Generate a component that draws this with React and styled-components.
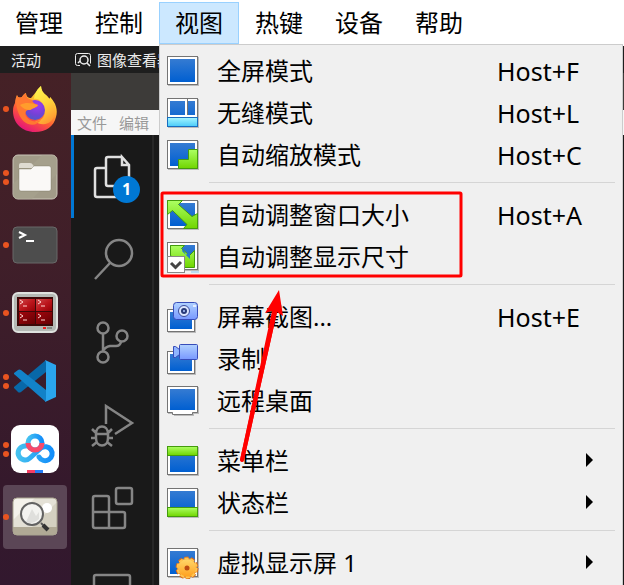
import React from "react";
import styled, { createGlobalStyle, css } from "styled-components";

const GlobalStyle = createGlobalStyle`
  *, *::before, *::after { box-sizing: border-box; }
  body {
    margin: 0;
    background: #151817;
    font-family: "Noto Sans", "Noto Sans CJK SC", sans-serif;
  }
  button { font: inherit; color: inherit; border: 0; background: none; padding: 0; margin: 0; }
  ul { list-style: none; margin: 0; padding: 0; }
  svg { display: block; }
`;

const Page = styled.div`
  position: relative;
  display: flex;
  flex-direction: column;
  height: 100vh;
  overflow: hidden;
`;

const MenuBar = styled.nav`
  display: flex;
  flex: none;
  height: 46px;
  padding-top: 2px;
  margin-left: -1px;
  background: #fff;
`;

const MenuBarItem = styled.button`
  width: 80px;
  height: 42px;
  font-size: 24px;
  line-height: 40px;
  color: #000;
  border: 1px solid ${(p) => (p.$open ? "#99d1ff" : "transparent")};
  background: ${(p) => (p.$open ? "#cce8ff" : "transparent")};
`;

const Desktop = styled.div`
  display: flex;
  flex-direction: column;
  flex: 1;
  min-height: 0;
`;

const TopPanel = styled.header`
  display: flex;
  align-items: center;
  flex: none;
  height: 27px;
  padding-left: 11px;
  background: #1e1e1e;
  color: #ececec;
  font-size: 15px;
  white-space: nowrap;
`;

const Activities = styled.button`
  width: 64px;
  text-align: left;
`;

const AppTitle = styled.span`
  display: flex;
  align-items: center;
  gap: 6px;
`;

const DesktopBody = styled.div`
  display: flex;
  flex: 1;
  min-height: 0;
`;

const Dock = styled.aside`
  display: flex;
  flex-direction: column;
  gap: 4px;
  flex: none;
  width: 71px;
  padding: 4px 4px 0 3px;
  background: linear-gradient(#452126, #401f29 35%, #35192c 80%, #32182e);
`;

const DockItem = styled.button`
  position: relative;
  display: grid;
  place-items: center;
  flex: none;
  height: 64px;
  border-radius: 4px;
  background: ${(p) => (p.$active ? "#5b4656" : "transparent")};
`;

const Running = styled.span`
  position: absolute;
  left: 0;
  top: 0;
  height: 100%;
  display: flex;
  flex-direction: column;
  justify-content: center;
  gap: 3px;
`;

const Dot = styled.i`
  width: 6px;
  height: 6px;
  border-radius: 50%;
  background: #e95420;
`;

const AppWindow = styled.section`
  display: flex;
  flex-direction: column;
  flex: 1;
  min-width: 0;
  background: #191919;
`;

const TitleBar = styled.div`
  flex: none;
  height: 37px;
  background: #3d3b39;
`;

const WindowMenu = styled.div`
  display: flex;
  align-items: center;
  gap: 12px;
  flex: none;
  height: 25px;
  padding-left: 6px;
  background: #f6f6f6;
  color: #999;
  font-size: 15px;
`;

const ActivityBar = styled.div`
  flex: 1;
  width: 83px;
  border-right: 2px solid #272727;
`;

const Activity = styled.button`
  position: relative;
  display: grid;
  place-items: center;
  width: 100%;
  height: 83px;
  color: ${(p) => (p.$active ? "#e0e0e0" : "#858585")};
  ${(p) =>
    p.$active &&
    css`
      box-shadow: inset 3px 0 #0078d4;
    `}
`;

const Badge = styled.span`
  position: absolute;
  left: 42px;
  top: 41px;
  width: 27px;
  height: 27px;
  border-radius: 50%;
  background: #0078d4;
  color: #fff;
  font: bold 16px/27px "Noto Sans", sans-serif;
  text-align: center;
`;

const Dropdown = styled.div`
  position: absolute;
  top: 44px;
  left: 159px;
  right: 1px;
  bottom: 0;
  padding-top: 5px;
  border: 1px solid #ccc;
  border-bottom: 0;
  background: #f0f0f0;
  color: #000;
`;

const MenuRow = styled.button`
  display: grid;
  grid-template-columns: 32px 1fr 125px;
  align-items: center;
  width: 100%;
  height: 42px;
  padding-left: 7px;
  text-align: left;
  font-size: 24px;
  line-height: 42px;
  white-space: nowrap;
`;

const Label = styled.span`
  padding-left: 18px;
`;

const Shortcut = styled.kbd`
  font: 25px/42px "Noto Sans", sans-serif;
`;

const SubmenuMark = styled.span`
  justify-self: end;
  margin-right: 28px;
  padding-bottom: 2px;
`;

const Divider = styled.li`
  height: 1px;
  margin: 6px 7px 11px 49px;
  background: #d5d5d5;
`;

const Annotation = styled.svg`
  position: absolute;
  left: 159px;
  top: 190px;
  pointer-events: none;
`;

/* ---------- dock icons ---------- */

const Firefox = () => (
  <svg width="46" height="48" viewBox="0 0 46 48">
    <defs>
      <linearGradient id="ffBody" x1="0.8" y1="0.05" x2="0.3" y2="1">
        <stop offset="0" stopColor="#fff44f" />
        <stop offset="0.35" stopColor="#ffb52e" />
        <stop offset="0.65" stopColor="#ff5a36" />
        <stop offset="1" stopColor="#e3117c" />
      </linearGradient>
      <radialGradient id="ffGlobe" cx="0.6" cy="0.25" r="0.8">
        <stop offset="0" stopColor="#a13cf0" />
        <stop offset="0.6" stopColor="#7541d6" />
        <stop offset="1" stopColor="#4d58c9" />
      </radialGradient>
      <linearGradient id="ffTail" x1="0.3" y1="0" x2="0.7" y2="1">
        <stop offset="0" stopColor="#fff44f" />
        <stop offset="0.5" stopColor="#ffd33a" />
        <stop offset="1" stopColor="#ff9532" />
      </linearGradient>
    </defs>
    <path d="M5 10C6 13 8 13 10 12C11 10 12 9 14 8C14 11 16 13 19 13L29 1C29 5 31 8 35 11C37 13 38 15 38 12C44 18 46 25 44 32C42 41 34 47 23 47C10 47 1 38 1 26C1 22 2 20 3 18C3 15 4 12 5 10Z" fill="url(#ffBody)" />
    <path d="M22 14C23 8 25 4 29 1C29 5 31 8 35 11L38 15V12C44 20 45 29 40 35C35 41 27 40 23 36C31 36 34 30 32 24C31 17 27 13 22 14Z" fill="url(#ffTail)" />
    <circle cx="23" cy="25" r="10" fill="url(#ffGlobe)" />
    <path d="M5 10C6 13 8 13 10 12C11 10 12 9 14 8C14 12 16 14 20 15C21 18 23 19 26 20C25 23 21 22 19 25C15 24 12 27 14 31C17 36 23 38 29 35C24 42 14 41 9 33C5 27 3 17 5 10Z" fill="#ff7831" />
    <path d="M8 20C14 17 19 18 26 20C24 23 21 23 18 25C14 25 10 23 8 20Z" fill="#ff9c2c" />
  </svg>
);

const Files = () => (
  <svg width="46" height="46" viewBox="0 0 46 46">
    <rect x="1" y="1" width="44" height="44" rx="5" fill="#a19b88" stroke="#c9c5b7" />
    <path d="M1 30L30 1H40Q45 1 45 6V20L20 45H6Q1 45 1 40Z" fill="#a9a390" opacity="0.6" />
    <path d="M7 13V11Q7 9 9 9H18Q20 9 21 11L23 14H7Z" fill="#dedbd1" />
    <path d="M7 15H19L22 12H37Q39 12 39 14V35Q39 37 37 37H9Q7 37 7 35Z" fill="#faf9f7" stroke="#77725f" strokeOpacity="0.4" />
  </svg>
);

const Terminal = () => (
  <svg width="46" height="38" viewBox="0 0 46 38">
    <rect x="1" y="1" width="44" height="36" rx="4" fill="#4d4d4d" stroke="#686868" />
    <path d="M7 6L13 9L7 12M14 15H22" fill="none" stroke="#fff" strokeWidth="2" />
  </svg>
);

const Terminator = () => (
  <svg width="46" height="42" viewBox="0 0 46 42">
    <defs>
      <linearGradient id="redPane" x1="0" y1="0" x2="1" y2="1">
        <stop offset="0" stopColor="#cc4a4c" />
        <stop offset="0.5" stopColor="#bd171d" />
        <stop offset="1" stopColor="#970006" />
      </linearGradient>
      <linearGradient id="darkRed" x1="0" y1="0" x2="1" y2="1">
        <stop offset="0" stopColor="#a3070d" />
        <stop offset="1" stopColor="#650004" />
      </linearGradient>
    </defs>
    <rect x="1" y="1" width="44" height="39" rx="5" fill="#b5b9b5" stroke="#dfe2df" strokeWidth="2" />
    <path d="M5 5H41V34H5Z" fill="#3d0909" />
    <rect x="7" y="7" width="16" height="12" fill="url(#redPane)" />
    <rect x="24" y="7" width="16" height="12" fill="url(#redPane)" />
    <rect x="7" y="20" width="16" height="12" fill="url(#darkRed)" />
    <rect x="24" y="20" width="16" height="12" fill="url(#darkRed)" />
    <path d="M8 8L11 10L8 12M11 14H15M26 8L29 10L26 12M29 14H33M8 22L11 24L8 26M11 28H15M26 22L29 24L26 26M29 28H33" fill="none" stroke="#ffd5d0" />
    <rect x="31" y="35" width="3" height="2" fill="#ef2020" />
    <rect x="35" y="35" width="5" height="2" fill="#858985" />
  </svg>
);

const VSCode = () => (
  <svg width="44" height="44" viewBox="0 0 44 44">
    <path d="M1 29L5 33Q6 34 8 33L33 13V1L1 28Z" fill="#0868a8" />
    <path d="M1 14L5 11Q6 10 8 11L33 31V43L1 15Z" fill="#1282c8" />
    <path d="M32 1L43 6V38L32 43Q33 42 33 40V4Q33 2 32 1Z" fill="#2aa5ed" />
  </svg>
);

const Baidu = () => (
  <svg width="48" height="48" viewBox="0 0 48 48">
    <defs>
      <linearGradient id="cloudBlue">
        <stop offset="0" stopColor="#45c1ef" />
        <stop offset="1" stopColor="#138efa" />
      </linearGradient>
    </defs>
    <rect width="48" height="48" rx="9" fill="#fff" />
    <g fill="none" stroke="url(#cloudBlue)" strokeWidth="5" strokeLinecap="round">
      <path d="M28 32A7 7 0 1 0 30 23L19 33A7 7 0 1 1 15 21" />
      <circle cx="24" cy="18" r="7" />
    </g>
    <path d="M17 18A7 7 0 0 0 31 18" fill="none" stroke="#f84a6b" strokeWidth="5" />
    <path d="M16 45H24V48H16Z" fill="#f83e64" />
    <path d="M24 45H32V48H24Z" fill="#247cf6" />
  </svg>
);

const ImageViewer = () => (
  <svg width="46" height="40" viewBox="0 0 46 40">
    <rect x="1" y="1" width="44" height="37" rx="4" fill="#e4e1d6" />
    <path d="M1 23L23 1H5Q1 1 1 5Z" fill="#f4f2eb" />
    <path d="M20 30L45 5V30Z" fill="#d4d0c1" />
    <path d="M1 30H45V34Q45 38 41 38H5Q1 38 1 34Z" fill="#b0a995" />
    <circle cx="35" cy="11" r="5" fill="#fff" />
    <rect x="1" y="1" width="44" height="37" rx="4" fill="none" stroke="#aaa591" />
    <circle cx="20" cy="17" r="11" fill="#f3f3f0" stroke="#626262" strokeWidth="2" />
    <path d="M14 25L20 12L24 19L27 15V22Q20 28 14 25Z" fill="#dfdfdc" />
    <path d="M29 26L32 29" stroke="#555" strokeWidth="2" />
    <path d="M31 28L36 33" stroke="#333" strokeWidth="4" />
  </svg>
);

const dockApps = [
  { name: "Firefox", Icon: Firefox, windows: 1 },
  { name: "文件", Icon: Files, windows: 2 },
  { name: "终端", Icon: Terminal, windows: 1 },
  { name: "Terminator", Icon: Terminator, windows: 1 },
  { name: "Visual Studio Code", Icon: VSCode, windows: 2 },
  { name: "百度网盘", Icon: Baidu, windows: 2 },
  { name: "图像查看器", Icon: ImageViewer, windows: 1, active: true },
];

/* ---------- activity bar icons ---------- */

const activities = [
  {
    name: "资源管理器",
    active: true,
    badge: 1,
    art: (
      <path d="M17 15H9Q7 15 7 17V42Q7 44 9 44H28Q30 44 31 42M34 4H20Q18 4 18 6V31Q18 33 20 33H39Q41 33 41 31V12L34 4V12H41" />
    ),
  },
  { name: "搜索", art: <path d="M44 17A13 13 0 1 1 18 17A13 13 0 1 1 44 17ZM22 27L7 43" /> },
  {
    name: "源代码管理",
    art: (
      <>
        <circle cx="15" cy="9" r="5.5" />
        <circle cx="34" cy="17" r="5.5" />
        <circle cx="15" cy="38" r="5.5" />
        <path d="M15 15V32Q17 28 22 27H28Q32 27 33 23" />
      </>
    ),
  },
  {
    name: "运行和调试",
    art: (
      <>
        <path d="M18 22V4L44 21L27 32" />
        <path d="M8 32V36C8 46 20 46 20 36V32C20 22 8 22 8 32ZM7 32H21M8 31L4 27M20 31L24 27M8 36H3M20 36H25M9 40L4 44M19 40L24 44" />
      </>
    ),
  },
  {
    name: "扩展",
    art: (
      <>
        <path d="M7 11H19Q21 11 21 13V27H35Q37 27 37 29V41Q37 43 35 43H7Q5 43 5 41V13Q5 11 7 11ZM5 27H21V43" />
        <rect x="28" y="3" width="16" height="16" rx="2" />
      </>
    ),
  },
  { name: "远程", art: <rect x="6" y="7" width="36" height="30" rx="2" /> },
];

/* ---------- menu icons ---------- */

const Screen = ({ y = 1, w = 31, h = 29 }) => (
  <>
    <rect x="1" y={y + 1} width={w} height={h} fill="#bbb" />
    <rect x="0.5" y={y + 0.5} width={w - 1} height={h - 1} fill="#fff" stroke="#747474" />
    <rect x="3" y={y + 3} width={w - 6} height={h - 6} fill="url(#screenBlue)" />
  </>
);

const green = { fill: "url(#lime)", stroke: "#439b0c" };

const menuArt = {
  full: <Screen />,
  seamless: (
    <>
      <Screen />
      <path d="M18 2H21V20H18Z" fill="#fff" />
      <path d="M20.5 1V19" stroke="#747474" />
      <path d="M1 18H30V20H1Z" fill="#fff" />
      <rect x="0.5" y="20.5" width="30" height="9" fill="url(#aqua)" stroke="#176dc0" />
    </>
  ),
  scale: (
    <>
      <Screen />
      <path d="M21.5 10.5H30.5V29.5H11.5V20.5H21.5Z" {...green} />
    </>
  ),
  resize: (
    <>
      <Screen />
      <path d="M0.5 1.5H15.5L11.5 5.5L25 17.5L30.5 14.5V29.5H16.5L20 25.5L5.5 11.5L0.5 15.5Z" {...green} />
    </>
  ),
  guest: (
    <>
      <rect x="24" y="20" width="8" height="12" fill="#bddcf3" />
      <Screen h={28} />
      <path d="M3.5 4.5H17.5L14.5 7.5L22.5 14.5L27.5 9.5V26.5H12V21L3.5 14.5Z" {...green} />
      <path d="M16 8L19 14L23 10V18L15 10Z" fill="#2574cf" />
      <rect x="0.5" y="15.5" width="17" height="16" fill="#fff" stroke="#888" />
      <path d="M4 22L8.5 26.5L14 21" fill="none" stroke="#444" strokeWidth="3" />
    </>
  ),
  shot: (
    <>
      <Screen y={8} w={28} h={23} />
      <rect x="6.5" y="1.5" width="24" height="17" rx="3" fill="url(#lens)" stroke="#374cb9" />
      <circle cx="17" cy="10" r="5.5" fill="#dce6ff" stroke="#3b4c9b" />
      <circle cx="17" cy="10" r="3" fill="#293a78" />
      <circle cx="17" cy="10" r="1" fill="#b5cbff" />
      <rect x="26" y="4" width="3" height="2" fill="#e5edff" />
    </>
  ),
  record: (
    <>
      <Screen y={8} w={28} h={23} />
      <path d="M6.5 3.5H8.5L12.5 6.5V11.5L8.5 14.5H6.5Z" fill="#8fb4ff" stroke="#374cb9" />
      <rect x="12.5" y="1.5" width="18" height="15" rx="1" fill="url(#lens)" stroke="#374cb9" />
    </>
  ),
  remote: (
    <>
      <path d="M7 27H27V31H7Z" fill="#bbb" />
      <Screen h={27} />
      <path d="M1 26H30V27H1Z" fill="#fff" />
      <path d="M0.5 26V27.5H5.5V29.5H25.5V27.5H30.5V26" fill="#fff" stroke="#747474" />
    </>
  ),
  menubar: (
    <>
      <Screen />
      <rect x="0.5" y="1.5" width="30" height="9" {...green} />
    </>
  ),
  statusbar: (
    <>
      <Screen />
      <rect x="0.5" y="20.5" width="30" height="9" {...green} />
    </>
  ),
  virtual: (
    <>
      <Screen />
      <circle cx="20" cy="21" r="9.5" fill="none" stroke="#d96b1c" strokeWidth="4" strokeDasharray="4 2" />
      <circle cx="20" cy="21" r="9.5" fill="url(#gold)" stroke="#e88b2b" />
      <circle cx="20" cy="21" r="9.5" fill="none" stroke="#ffc551" strokeWidth="2" strokeDasharray="4 2" />
      <circle cx="20" cy="21" r="2.5" fill="#bd4c12" />
    </>
  ),
};

const MenuDefs = () => (
  <svg width="0" height="0" aria-hidden="true">
    <defs>
      {[
        ["screenBlue", "#357bd2", "#005fd1"],
        ["lime", "#acff63", "#70d500"],
        ["aqua", "#a6f6ff", "#4acbf9"],
        ["lens", "#b1d2ff", "#7898ff"],
        ["gold", "#ffda6d", "#ff9e1c"],
      ].map(([id, a, b]) => (
        <linearGradient key={id} id={id} x1="0" y1="0" x2="0" y2="1">
          <stop offset="0" stopColor={a} />
          <stop offset="1" stopColor={b} />
        </linearGradient>
      ))}
    </defs>
  </svg>
);

const menuGroups = [
  [
    { icon: "full", label: "全屏模式", keys: "Host+F" },
    { icon: "seamless", label: "无缝模式", keys: "Host+L" },
    { icon: "scale", label: "自动缩放模式", keys: "Host+C" },
  ],
  [
    { icon: "resize", label: "自动调整窗口大小", keys: "Host+A" },
    { icon: "guest", label: "自动调整显示尺寸", checked: true },
  ],
  [
    { icon: "shot", label: "屏幕截图...", keys: "Host+E" },
    { icon: "record", label: "录制" },
    { icon: "remote", label: "远程桌面" },
  ],
  [
    { icon: "menubar", label: "菜单栏", submenu: true },
    { icon: "statusbar", label: "状态栏", submenu: true },
  ],
  [{ icon: "virtual", label: "虚拟显示屏 1", submenu: true }],
];

const MenuItem = ({ icon, label, keys, submenu, checked }) => (
  <li role="none">
    <MenuRow
      role={checked ? "menuitemcheckbox" : "menuitem"}
      aria-checked={checked}
      aria-haspopup={submenu ? "menu" : undefined}
    >
      <svg width="32" height="32" viewBox="0 0 32 32" aria-hidden="true">
        {menuArt[icon]}
      </svg>
      <Label>{label}</Label>
      {keys && <Shortcut>{keys}</Shortcut>}
      {submenu && (
        <SubmenuMark>
          <svg width="8" height="14" viewBox="0 0 8 14" aria-hidden="true">
            <path d="M0 0L7 7L0 14Z" fill="#000" />
          </svg>
        </SubmenuMark>
      )}
    </MenuRow>
  </li>
);

const barItems = ["管理", "控制", "视图", "热键", "设备", "帮助"];

export default function App() {
  return (
    <Page>
      <GlobalStyle />
      <MenuBar>
        {barItems.map((name) => (
          <MenuBarItem key={name} $open={name === "视图"} aria-expanded={name === "视图"}>
            {name}
          </MenuBarItem>
        ))}
      </MenuBar>

      <Desktop>
        <TopPanel>
          <Activities>活动</Activities>
          <AppTitle>
            <svg width="16" height="16" viewBox="0 0 16 16" fill="none" stroke="#ececec" aria-hidden="true">
              <path d="M5 13.5H2.5Q.5 13.5 .5 11.5V3.5Q.5 1.5 2.5 1.5H13.5Q15.5 1.5 15.5 3.5V11.5" />
              <circle cx="9" cy="8" r="4" strokeWidth="1.5" />
              <path d="M12 11L15 14M3 11L5 9" strokeWidth="1.5" />
            </svg>
            图像查看器
          </AppTitle>
        </TopPanel>
        <DesktopBody>
          <Dock>
            {dockApps.map(({ name, Icon, windows, active }) => (
              <DockItem key={name} aria-label={name} $active={active}>
                <Running>
                  {Array.from({ length: windows }, (_, i) => (
                    <Dot key={i} />
                  ))}
                </Running>
                <Icon />
              </DockItem>
            ))}
          </Dock>
          <AppWindow>
            <TitleBar />
            <WindowMenu>
              <button>文件</button>
              <button>编辑</button>
            </WindowMenu>
            <ActivityBar>
              {activities.map(({ name, art, active, badge }) => (
                <Activity key={name} aria-label={name} $active={active}>
                  <svg width="48" height="48" viewBox="0 0 48 48" fill="none" stroke="currentColor" strokeWidth="2.5">
                    {art}
                  </svg>
                  {badge && <Badge>{badge}</Badge>}
                </Activity>
              ))}
            </ActivityBar>
          </AppWindow>
        </DesktopBody>
      </Desktop>

      <Dropdown>
        <MenuDefs />
        <ul role="menu" aria-label="视图">
          {menuGroups.map((group, i) => (
            <React.Fragment key={group[0].label}>
              {i > 0 && <Divider role="separator" />}
              {group.map((item) => (
                <MenuItem key={item.label} {...item} />
              ))}
            </React.Fragment>
          ))}
        </ul>
      </Dropdown>

      <Annotation width="306" height="274" viewBox="0 0 306 274" aria-hidden="true">
        <rect x="3" y="3" width="299" height="83" rx="1" fill="none" stroke="#f00" strokeWidth="3" />
        <path d="M83 270L116 122" stroke="#f00" strokeWidth="4" strokeLinecap="round" />
        <path d="M120 100L106 123L113 121L81 270H85L118 122L124 126Z" fill="#f00" />
      </Annotation>
    </Page>
  );
}
